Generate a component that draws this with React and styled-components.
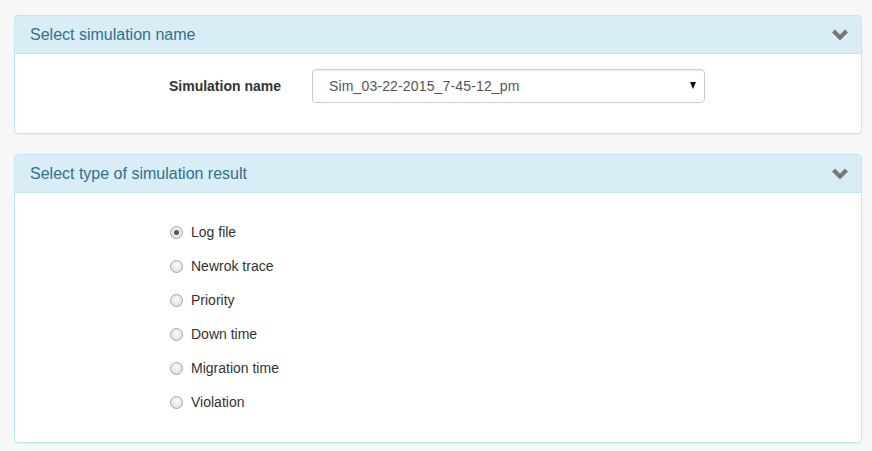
import React, { useState } from 'react';
import styled, { createGlobalStyle } from 'styled-components';

const GlobalStyle = createGlobalStyle`
  body {
    margin: 0;
    background: #f7f7f7;
    font-family: "Liberation Sans", Arial, sans-serif;
    color: #333;
  }
`;

const Page = styled.div`
  padding: 15px 10px 10px 14px;
`;

const Panel = styled.div`
  background: #fff;
  border: 1px solid #bce8f1;
  border-radius: 4px;
  margin-bottom: 20px;
  box-shadow: 0 1px 1px rgba(0, 0, 0, 0.05);
`;

const PanelHeading = styled.div`
  display: flex;
  align-items: center;
  justify-content: space-between;
  height: 37px;
  padding: 0 15px;
  background: #d9edf7;
  border-bottom: 1px solid #bce8f1;
  border-radius: 3px 3px 0 0;
  color: #31708f;
  font-size: 16px;
`;

const Chevron = styled.svg`
  width: 16px;
  height: 12px;
  margin-right: -2px;
`;

const PanelBody = styled.div`
  padding: ${(p) => p.$pad};
`;

const FormRow = styled.div`
  display: flex;
  align-items: center;
`;

const FieldLabel = styled.label`
  width: 266px;
  text-align: right;
  font-weight: bold;
  font-size: 14px;
  color: #333;
`;

const SelectWrap = styled.div`
  position: relative;
  margin-left: 31px;
  width: 393px;
`;

const Select = styled.select`
  appearance: none;
  width: 100%;
  height: 34px;
  padding: 0 16px;
  border: 1px solid #ccc;
  border-radius: 4px;
  background: #fff;
  color: #555;
  font-family: inherit;
  font-size: 14px;
  letter-spacing: 0.15px;
  box-shadow: inset 0 1px 1px rgba(0, 0, 0, 0.075);
`;

const Caret = styled.span`
  position: absolute;
  right: 9px;
  top: 13px;
  width: 0;
  height: 0;
  border-left: 3.5px solid transparent;
  border-right: 3.5px solid transparent;
  border-top: 7px solid #111;
  pointer-events: none;
`;

const RadioList = styled.div`
  display: flex;
  flex-direction: column;
  gap: 14px;
  padding-left: 155px;
`;

const RadioRow = styled.label`
  display: flex;
  align-items: center;
  height: 20px;
  font-size: 14px;
  color: #333;
  cursor: pointer;
`;

const RadioInput = styled.input`
  appearance: none;
  margin: 0 8px 0 0;
  width: 13px;
  height: 13px;
  border-radius: 50%;
  border: 1px solid #a6a6a6;
  background: radial-gradient(circle at 50% 40%, #fafafa 0%, #e3e3e3 70%, #d6d6d6 100%);
  position: relative;

  &:checked::after {
    content: '';
    position: absolute;
    left: 3px;
    top: 3px;
    width: 5px;
    height: 5px;
    border-radius: 50%;
    background: #555;
  }
`;

function ChevronDown() {
  return (
    <Chevron viewBox="0 0 16 12">
      <path d="M0 3.5 L3 0.5 L8 5.5 L13 0.5 L16 3.5 L8 11.5 Z" fill="#777" />
    </Chevron>
  );
}

const options = ['Log file', 'Newrok trace', 'Priority', 'Down time', 'Migration time', 'Violation'];

export default function App() {
  const [result, setResult] = useState('Log file');

  return (
    <Page>
      <GlobalStyle />
      <Panel>
        <PanelHeading>
          Select simulation name
          <ChevronDown />
        </PanelHeading>
        <PanelBody $pad="15px 0 30px">
          <FormRow>
            <FieldLabel>Simulation name</FieldLabel>
            <SelectWrap>
              <Select defaultValue="Sim_03-22-2015_7-45-12_pm">
                <option>Sim_03-22-2015_7-45-12_pm</option>
              </Select>
              <Caret />
            </SelectWrap>
          </FormRow>
        </PanelBody>
      </Panel>
      <Panel>
        <PanelHeading>
          Select type of simulation result
          <ChevronDown />
        </PanelHeading>
        <PanelBody $pad="29px 0 30px">
          <RadioList>
            {options.map((o) => (
              <RadioRow key={o}>
                <RadioInput
                  type="radio"
                  name="result"
                  checked={result === o}
                  onChange={() => setResult(o)}
                />
                {o}
              </RadioRow>
            ))}
          </RadioList>
        </PanelBody>
      </Panel>
    </Page>
  );
}
